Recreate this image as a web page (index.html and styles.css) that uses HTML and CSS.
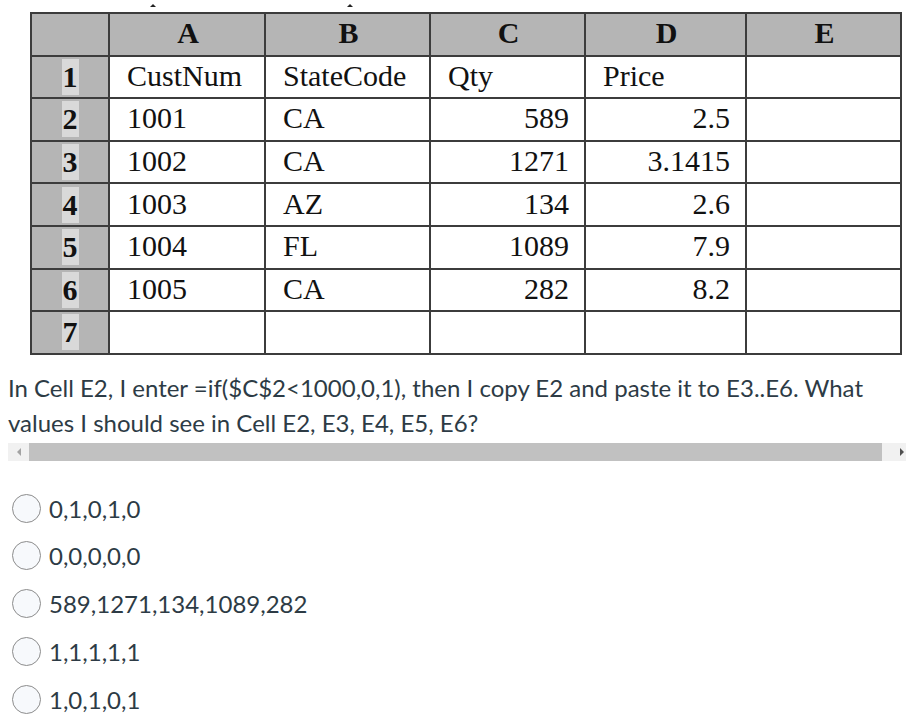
FILE: index.html
```html
<!DOCTYPE html>
<html>
<head>
<meta charset="utf-8">
<link rel="stylesheet" href="styles.css">
</head>
<body>
<div class="marks"><span class="mark m1"></span><span class="mark m2"></span></div>
<table class="sheet">
  <colgroup>
    <col class="c0"><col class="c1"><col class="c2"><col class="c3"><col class="c4"><col class="c5">
  </colgroup>
  <tr class="hdr"><th></th><th>A</th><th>B</th><th>C</th><th>D</th><th>E</th></tr>
  <tr><td class="rn"><span>1</span></td><td>CustNum</td><td>StateCode</td><td>Qty</td><td>Price</td><td></td></tr>
  <tr><td class="rn"><span>2</span></td><td>1001</td><td>CA</td><td class="num">589</td><td class="num">2.5</td><td></td></tr>
  <tr><td class="rn"><span>3</span></td><td>1002</td><td>CA</td><td class="num">1271</td><td class="num">3.1415</td><td></td></tr>
  <tr><td class="rn"><span>4</span></td><td>1003</td><td>AZ</td><td class="num">134</td><td class="num">2.6</td><td></td></tr>
  <tr><td class="rn"><span>5</span></td><td>1004</td><td>FL</td><td class="num">1089</td><td class="num">7.9</td><td></td></tr>
  <tr><td class="rn"><span>6</span></td><td>1005</td><td>CA</td><td class="num">282</td><td class="num">8.2</td><td></td></tr>
  <tr><td class="rn"><span>7</span></td><td></td><td></td><td></td><td></td><td></td></tr>
</table>
<p class="question">In Cell E2, I enter =if($C$2&lt;1000,0,1), then I copy E2 and paste it to E3..E6. What values I should see in Cell E2, E3, E4, E5, E6?</p>
<div class="scrollbar">
  <div class="arrow left"><span class="tri-l"></span></div>
  <div class="thumb"></div>
  <div class="arrow right"><span class="tri-r"></span></div>
</div>
<ul class="options">
  <li><span class="radio"></span><span class="label">0,1,0,1,0</span></li>
  <li><span class="radio"></span><span class="label">0,0,0,0,0</span></li>
  <li><span class="radio"></span><span class="label">589,1271,134,1089,282</span></li>
  <li><span class="radio"></span><span class="label">1,1,1,1,1</span></li>
  <li><span class="radio"></span><span class="label">1,0,1,0,1</span></li>
</ul>
</body>
</html>
```
FILE: styles.css
```css
* { box-sizing: border-box; }
body {
  margin: 0;
  background: #fff;
  font-family: Lato, "Liberation Sans", sans-serif;
  color: #2d3b45;
}
.marks {
  height: 12px;
  display: flex;
  align-items: flex-end;
  padding-bottom: 5px;
}
.mark {
  width: 0; height: 0;
  border-left: 3px solid transparent;
  border-right: 3px solid transparent;
  border-bottom: 3px solid #222;
}
.m1 { margin-left: 150px; }
.m2 { margin-left: 191px; }
.sheet {
  margin-left: 30px;
  border-collapse: collapse;
  table-layout: fixed;
  width: 870px;
  font-family: "Liberation Serif", "Times New Roman", serif;
  font-size: 30px;
  color: #111;
  border: 2px solid #3c3c3c;
}
.c0 { width: 78px; }
.c1 { width: 156px; }
.c2 { width: 165px; }
.c3 { width: 155px; }
.c4 { width: 161px; }
.c5 { width: 155px; }
.sheet th, .sheet td {
  border: 2px solid #3c3c3c;
  height: 42.6px;
  padding: 0 15px 2px 17px;
  line-height: 30px;
  white-space: nowrap;
  text-align: left;
  vertical-align: middle;
}
.sheet th {
  background: #b5b5b5;
  text-align: center;
  font-weight: bold;
}
.sheet td.rn {
  background: #b5b5b5;
  text-align: center;
  font-weight: bold;
  padding: 0;
}
.sheet td.rn span {
  background: #d9d9d9;
  display: inline-block;
  padding: 2px 1px;
  line-height: 32px;
}
.sheet td.num { text-align: right; }
.question {
  margin: 15px 0 0 0;
  padding: 0 8px;
  font-size: 24px;
  line-height: 35px;
  color: #2d3b45;
}
.scrollbar {
  margin: 3px 0 0 8px;
  height: 18px;
  display: flex;
  background: #f1f1f1;
}
.arrow {
  width: 21px;
  display: flex;
  align-items: center;
  justify-content: center;
}
.arrow.right { width: 24px; justify-content: flex-end; padding-right: 2px; }
.tri-l {
  width: 0; height: 0;
  border-top: 4px solid transparent;
  border-bottom: 4px solid transparent;
  border-right: 4px solid #a3a3a3;
}
.tri-r {
  width: 0; height: 0;
  border-top: 4px solid transparent;
  border-bottom: 4px solid transparent;
  border-left: 4px solid #505050;
}
.thumb {
  flex: 1;
  background: #c1c1c1;
}
.options {
  list-style: none;
  margin: 33px 0 0 0;
  padding: 0 0 0 12px;
  display: flex;
  flex-direction: column;
  gap: 18.7px;
}
.options li {
  display: flex;
  align-items: center;
  gap: 8px;
  height: 29px;
}
.radio {
  width: 29px;
  height: 29px;
  border-radius: 50%;
  border: 1px solid #8c8c8c;
  background: #f7f9fc;
  flex: none;
}
.label {
  font-size: 24px;
  color: #2d3b45;
}
```
